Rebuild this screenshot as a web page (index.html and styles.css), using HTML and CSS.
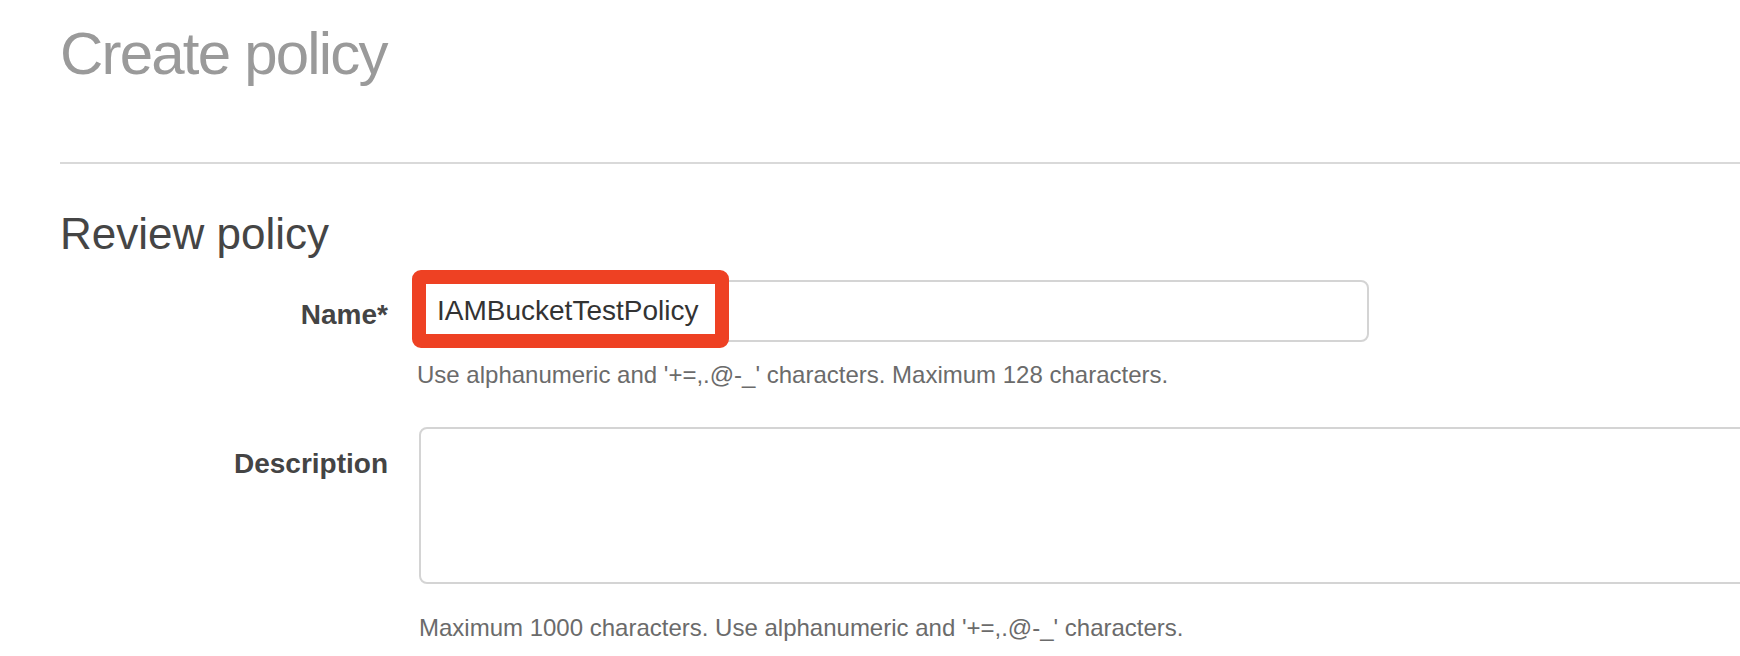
FILE: index.html
```html
<!DOCTYPE html>
<html lang="en">
<head>
<meta charset="utf-8">
<title>Create policy</title>
<link rel="stylesheet" href="styles.css">
</head>
<body>
<div class="page">
  <h1 class="page-title">Create policy</h1>
  <div class="divider"></div>
  <h2 class="section-title">Review policy</h2>
  <div class="form">
    <div class="row row-name">
      <label class="label" for="policy-name">Name*</label>
      <div class="field">
        <div class="input-wrap">
          <input id="policy-name" class="text-input" type="text" value="IAMBucketTestPolicy">
          <div class="highlight"></div>
        </div>
        <p class="hint hint-name">Use alphanumeric and '+=,.@-_' characters. Maximum 128 characters.</p>
      </div>
    </div>
    <div class="row row-desc">
      <label class="label" for="policy-desc">Description</label>
      <div class="field">
        <textarea id="policy-desc" class="text-area"></textarea>
        <p class="hint hint-desc">Maximum 1000 characters. Use alphanumeric and '+=,.@-_' characters.</p>
      </div>
    </div>
  </div>
</div>
</body>
</html>
```
FILE: styles.css
```css
html, body {
  margin: 0;
  padding: 0;
  overflow: hidden;
  background: #ffffff;
}

body {
  font-family: "Liberation Sans", Arial, Helvetica, sans-serif;
  color: #444444;
}

.page {
  padding: 24px 0 0 60px;
}

.page-title {
  margin: 0;
  font-size: 60px;
  line-height: 60px;
  font-weight: normal;
  letter-spacing: -1.8px;
  color: #9a9a9a;
}

.divider {
  height: 2px;
  background: #d9d9d9;
  margin-top: 78px;
}

.section-title {
  margin: 50px 0 0 0;
  font-size: 44px;
  line-height: 40px;
  font-weight: normal;
  color: #454545;
}

.form {
  margin-top: 26px;
}

.row {
  display: flex;
  align-items: flex-start;
}

.label {
  flex: 0 0 328px;
  box-sizing: border-box;
  text-align: right;
  font-size: 28px;
  line-height: 34px;
  font-weight: bold;
  color: #444444;
  padding-top: 18px;
}

.field {
  margin-left: 31px;
  flex: 1 1 auto;
}

.input-wrap {
  position: relative;
  width: 950px;
}

.text-input {
  display: block;
  box-sizing: border-box;
  width: 950px;
  height: 62px;
  margin: 0;
  padding: 0 16px;
  border: 2px solid #d4d4d4;
  border-radius: 8px;
  font-family: "Liberation Sans", Arial, Helvetica, sans-serif;
  font-size: 28px;
  color: #333333;
  background: #ffffff;
  outline: none;
}

.highlight {
  position: absolute;
  left: -7px;
  top: -10px;
  width: 317px;
  height: 78px;
  box-sizing: border-box;
  border: 14px solid #ee4123;
  border-radius: 9px;
  pointer-events: none;
}

.hint {
  margin: 0;
  font-size: 24px;
  line-height: 29px;
  color: #6b6b6b;
}

.hint-name {
  margin-top: 18px;
  margin-left: -2px;
}

.row-desc {
  margin-top: 38px;
}

.row-desc .label {
  padding-top: 20px;
}

.text-area {
  display: block;
  box-sizing: border-box;
  width: 1400px;
  height: 157px;
  margin: 0;
  border: 2px solid #d4d4d4;
  border-radius: 8px;
  resize: none;
  font-family: "Liberation Sans", Arial, Helvetica, sans-serif;
  font-size: 24px;
  outline: none;
}

.hint-desc {
  margin-top: 29px;
}
```
